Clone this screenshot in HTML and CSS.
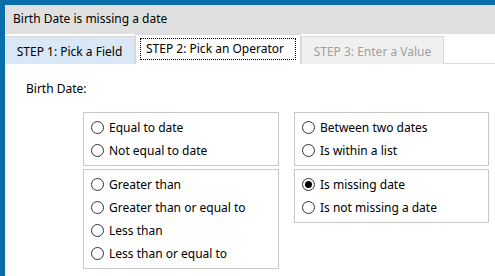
FILE: index.html
```html
<!DOCTYPE html>
<html lang="en">
<head>
    <meta charset="UTF-8">
    <title>Birth Date is missing a date</title>
    <link rel="stylesheet" href="styles.css">
</head>
<body>
    <div class="window">
        <div class="titleBar">Birth Date is missing a date</div>
        <div class="tabs">
            <div class="tab done">STEP 1: Pick a Field</div>
            <div class="tab active"><span class="focus">STEP 2: Pick an Operator</span></div>
            <div class="tab disabled">STEP 3: Enter a Value</div>
            <div class="tabFill"></div>
        </div>
        <div class="content">
            <div class="fieldName">Birth Date:</div>
            <div class="groups">
                <div class="group">
                    <label class="option"><span class="radio"></span>Equal to date</label>
                    <label class="option"><span class="radio"></span>Not equal to date</label>
                </div>
                <div class="group">
                    <label class="option"><span class="radio"></span>Between two dates</label>
                    <label class="option"><span class="radio"></span>Is within a list</label>
                </div>
                <div class="group">
                    <label class="option"><span class="radio"></span>Greater than</label>
                    <label class="option"><span class="radio"></span>Greater than or equal to</label>
                    <label class="option"><span class="radio"></span>Less than</label>
                    <label class="option"><span class="radio"></span>Less than or equal to</label>
                </div>
                <div class="group">
                    <label class="option"><span class="radio checked"></span>Is missing date</label>
                    <label class="option"><span class="radio"></span>Is not missing a date</label>
                </div>
            </div>
        </div>
    </div>
</body>
</html>
```

FILE: styles.css
```css
body {
    margin: 0;
    font-family: 'Noto Sans', sans-serif;
    font-size: 12px;
    color: #000;
    background: #fff;
    overflow: hidden;
}
.window {
    height: 276px;
    border-top: 5px solid #0a6eab;
    border-left: 5px solid #0a6eab;
    box-sizing: border-box;
}
.titleBar {
    height: 29px;
    line-height: 28px;
    padding-left: 8px;
    background: #e0e0e0;
}
.tabs {
    display: flex;
    align-items: flex-end;
    height: 30px;
}
.tab {
    height: 28px;
    line-height: 28px;
    padding-top: 1px;
    box-sizing: border-box;
    border: 1px solid #d9d9d9;
    border-bottom: none;
    text-align: center;
}
.tab.done {
    width: 130px;
    background: #d9e8f7;
    border-left: none;
}
.tab.active {
    height: 30px;
    width: 166px;
    background: #fff;
    padding: 3px 4px 5px;
    text-align: left;
}
.tab.active .focus {
    display: block;
    border: 1px dotted #000;
    padding-left: 5px;
    line-height: 20px;
}
.tab.disabled {
    width: 143px;
    background: #f0f0f0;
    color: #a0a0a0;
}
.tabFill {
    flex: 1;
    border-bottom: 1px solid #d9d9d9;
}
.content {
    padding: 16px 0 0 21px;
}
.fieldName {
    height: 17px;
    line-height: 17px;
}
.groups {
    display: grid;
    grid-template-columns: 196px 195px;
    gap: 3px 15px;
    margin: 15px 0 0 57px;
    align-items: start;
}
.group {
    border: 1px solid #c8c8c8;
    padding: 3px 0 3px 7px;
}
.option {
    display: flex;
    align-items: center;
    height: 23px;
    gap: 5px;
}
.radio {
    width: 11px;
    height: 11px;
    border: 1px solid #333;
    border-radius: 50%;
    position: relative;
    flex-shrink: 0;
}
.radio.checked::after {
    content: '';
    position: absolute;
    left: 2px;
    top: 2px;
    width: 7px;
    height: 7px;
    border-radius: 50%;
    background: #000;
}
```
